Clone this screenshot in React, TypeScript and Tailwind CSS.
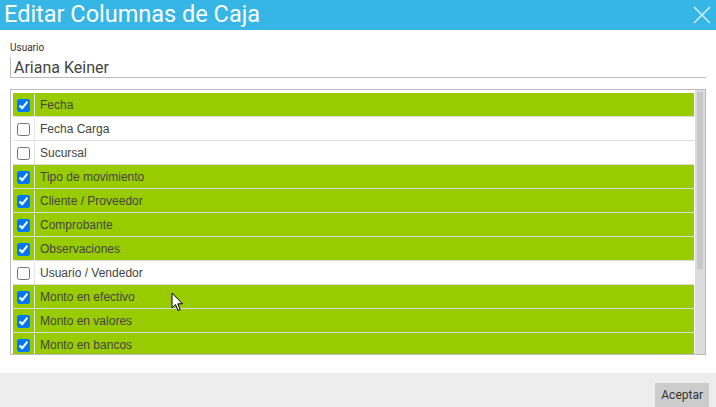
import React from "react";

const columns = [
  { label: "Fecha", checked: true },
  { label: "Fecha Carga", checked: false },
  { label: "Sucursal", checked: false },
  { label: "Tipo de movimiento", checked: true },
  { label: "Cliente / Proveedor", checked: true },
  { label: "Comprobante", checked: true },
  { label: "Observaciones", checked: true },
  { label: "Usuario / Vendedor", checked: false },
  { label: "Monto en efectivo", checked: true },
  { label: "Monto en valores", checked: true },
  { label: "Monto en bancos", checked: true },
];

export default function App() {
  return (
    <div className="relative flex h-[407px] w-[716px] flex-col overflow-hidden bg-white font-['Roboto',sans-serif]">
      <div className="flex h-[30px] shrink-0 items-center justify-between bg-[#35b6e4] pl-[4px] pr-[5px]">
        <h1 className="text-[23.5px] font-normal leading-none text-white">Editar Columnas de Caja</h1>
        <svg className="h-[18px] w-[18px] text-[#d6f0fa]" viewBox="0 0 18 18" fill="none" stroke="currentColor" strokeWidth={1.5}>
          <path d="M1 1L17 17M17 1L1 17" />
        </svg>
      </div>

      <div className="flex-1 px-[10px] pt-[12px]">
        <label className="block text-[10px] leading-[12px] text-[#333]">Usuario</label>
        <div className="mt-[3px] h-[21px] border-b border-l border-[#bbbbbb] pl-[3px] text-[16px] leading-[21px] text-[#444]">
          Ariana Keiner
        </div>

        <div className="mt-[11px] flex h-[266px] border border-[#bbbbbb] pl-[2px]">
          <div className="flex-1 overflow-hidden pr-[1px] pt-[3px]">
            {columns.map((c) => (
              <div
                key={c.label}
                className={`flex h-[24px] items-center border-b border-[#dddddd] pt-[1px] font-['Liberation_Sans',Arial,sans-serif] text-[12px] text-[#444] ${
                  c.checked ? "bg-[#99cc00]" : "bg-white"
                }`}
              >
                <div className="flex h-full w-[22px] items-center justify-center border-r border-[#e4e4e4]">
                  <input type="checkbox" defaultChecked={c.checked} className="m-0 h-[13px] w-[13px]" />
                </div>
                <span className="pl-[5px]">{c.label}</span>
              </div>
            ))}
          </div>
          <div className="w-[10px] bg-[#dcdcdc] px-[2px] pt-[2px]">
            <div className="h-[177px] bg-[#c8c8c8]" />
          </div>
        </div>
      </div>

      <div className="flex h-[34px] shrink-0 items-end justify-end bg-[#ededed] pr-[7px]">
        <button className="h-[24px] bg-[#cccccc] px-[6px] font-['Roboto',sans-serif] text-[12px] text-[#333]">
          Aceptar
        </button>
      </div>

      <svg className="absolute left-[171px] top-[292px] h-[20px] w-[13px]" viewBox="0 0 13 20">
        <path d="M1 1L1 16L4.5 12.5L7 18.5L9.2 17.5L6.8 11.8L11.5 11.8Z" fill="white" stroke="black" strokeWidth={1} strokeLinejoin="round" />
      </svg>
    </div>
  );
}
